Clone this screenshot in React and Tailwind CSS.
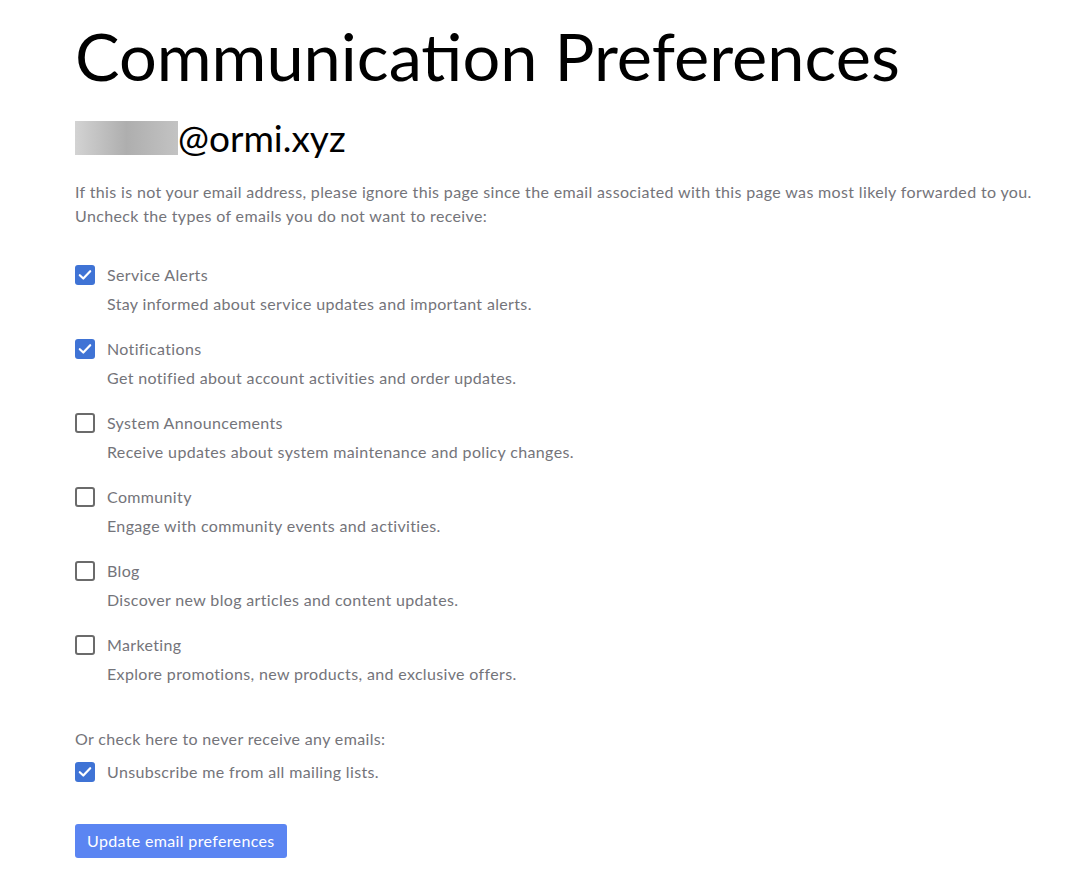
import { useState } from 'react';

const items = [
  { key: 'alerts', label: 'Service Alerts', desc: 'Stay informed about service updates and important alerts.', on: true },
  { key: 'notif', label: 'Notifications', desc: 'Get notified about account activities and order updates.', on: true },
  { key: 'system', label: 'System Announcements', desc: 'Receive updates about system maintenance and policy changes.', on: false },
  { key: 'community', label: 'Community', desc: 'Engage with community events and activities.', on: false },
  { key: 'blog', label: 'Blog', desc: 'Discover new blog articles and content updates.', on: false },
  { key: 'marketing', label: 'Marketing', desc: 'Explore promotions, new products, and exclusive offers.', on: false },
];

function Box({ checked, onClick }) {
  return checked ? (
    <button onClick={onClick} className="w-[20px] h-[20px] rounded-[3px] bg-[#3f73d5] flex items-center justify-center shrink-0">
      <svg width="16" height="16" viewBox="0 0 16 16" fill="none">
        <path d="M2.8 8.2 L6.3 11.5 L13.2 4.2" stroke="white" strokeWidth="2.2" strokeLinecap="round" strokeLinejoin="round" />
      </svg>
    </button>
  ) : (
    <button onClick={onClick} className="w-[20px] h-[20px] rounded-[3px] border-2 border-[#6b6b6b] bg-white shrink-0" />
  );
}

export default function App() {
  const [prefs, setPrefs] = useState(Object.fromEntries(items.map(i => [i.key, i.on])));
  const [unsub, setUnsub] = useState(true);

  return (
    <div className="min-h-screen bg-white pl-[75px] pr-6 pt-[17px] text-[#74747a] tracking-[0.35px]" style={{ fontFamily: 'Lato, "Open Sans", sans-serif' }}>
      <h1 className="text-[66.7px] leading-[76px] text-black font-normal tracking-normal">Communication Preferences</h1>

      <div className="mt-[23px] flex items-center h-[44px] text-[37px] text-black tracking-normal">
        <span className="w-[103px] h-[34px] bg-gradient-to-r from-[#c8c8c8] via-[#9a9a9a] to-[#b4b4b4] opacity-80" />
        <span>@ormi.xyz</span>
      </div>

      <div className="mt-[20px] text-[16px] leading-[24px]">
        <p>If this is not your email address, please ignore this page since the email associated with this page was most likely forwarded to you.</p>
        <p>Uncheck the types of emails you do not want to receive:</p>
      </div>

      <div className="mt-[35px] flex flex-col gap-[19px]">
        {items.map(i => (
          <div key={i.key}>
            <div className="flex items-center gap-[12px] h-[24px]">
              <Box checked={prefs[i.key]} onClick={() => setPrefs({ ...prefs, [i.key]: !prefs[i.key] })} />
              <span className="text-[16px]">{i.label}</span>
            </div>
            <p className="pl-[32px] mt-[2px] text-[16px] leading-[29px]">{i.desc}</p>
          </div>
        ))}
      </div>

      <p className="mt-[39px] text-[16px] leading-[24px]">Or check here to never receive any emails:</p>
      <div className="mt-[9px] flex items-center gap-[12px] h-[24px]">
        <Box checked={unsub} onClick={() => setUnsub(!unsub)} />
        <span className="text-[16px]">Unsubscribe me from all mailing lists.</span>
      </div>

      <button className="mt-[40px] h-[34px] px-[12px] rounded-[3px] bg-[#5b85f2] text-white text-[16px]">Update email preferences</button>
    </div>
  );
}
